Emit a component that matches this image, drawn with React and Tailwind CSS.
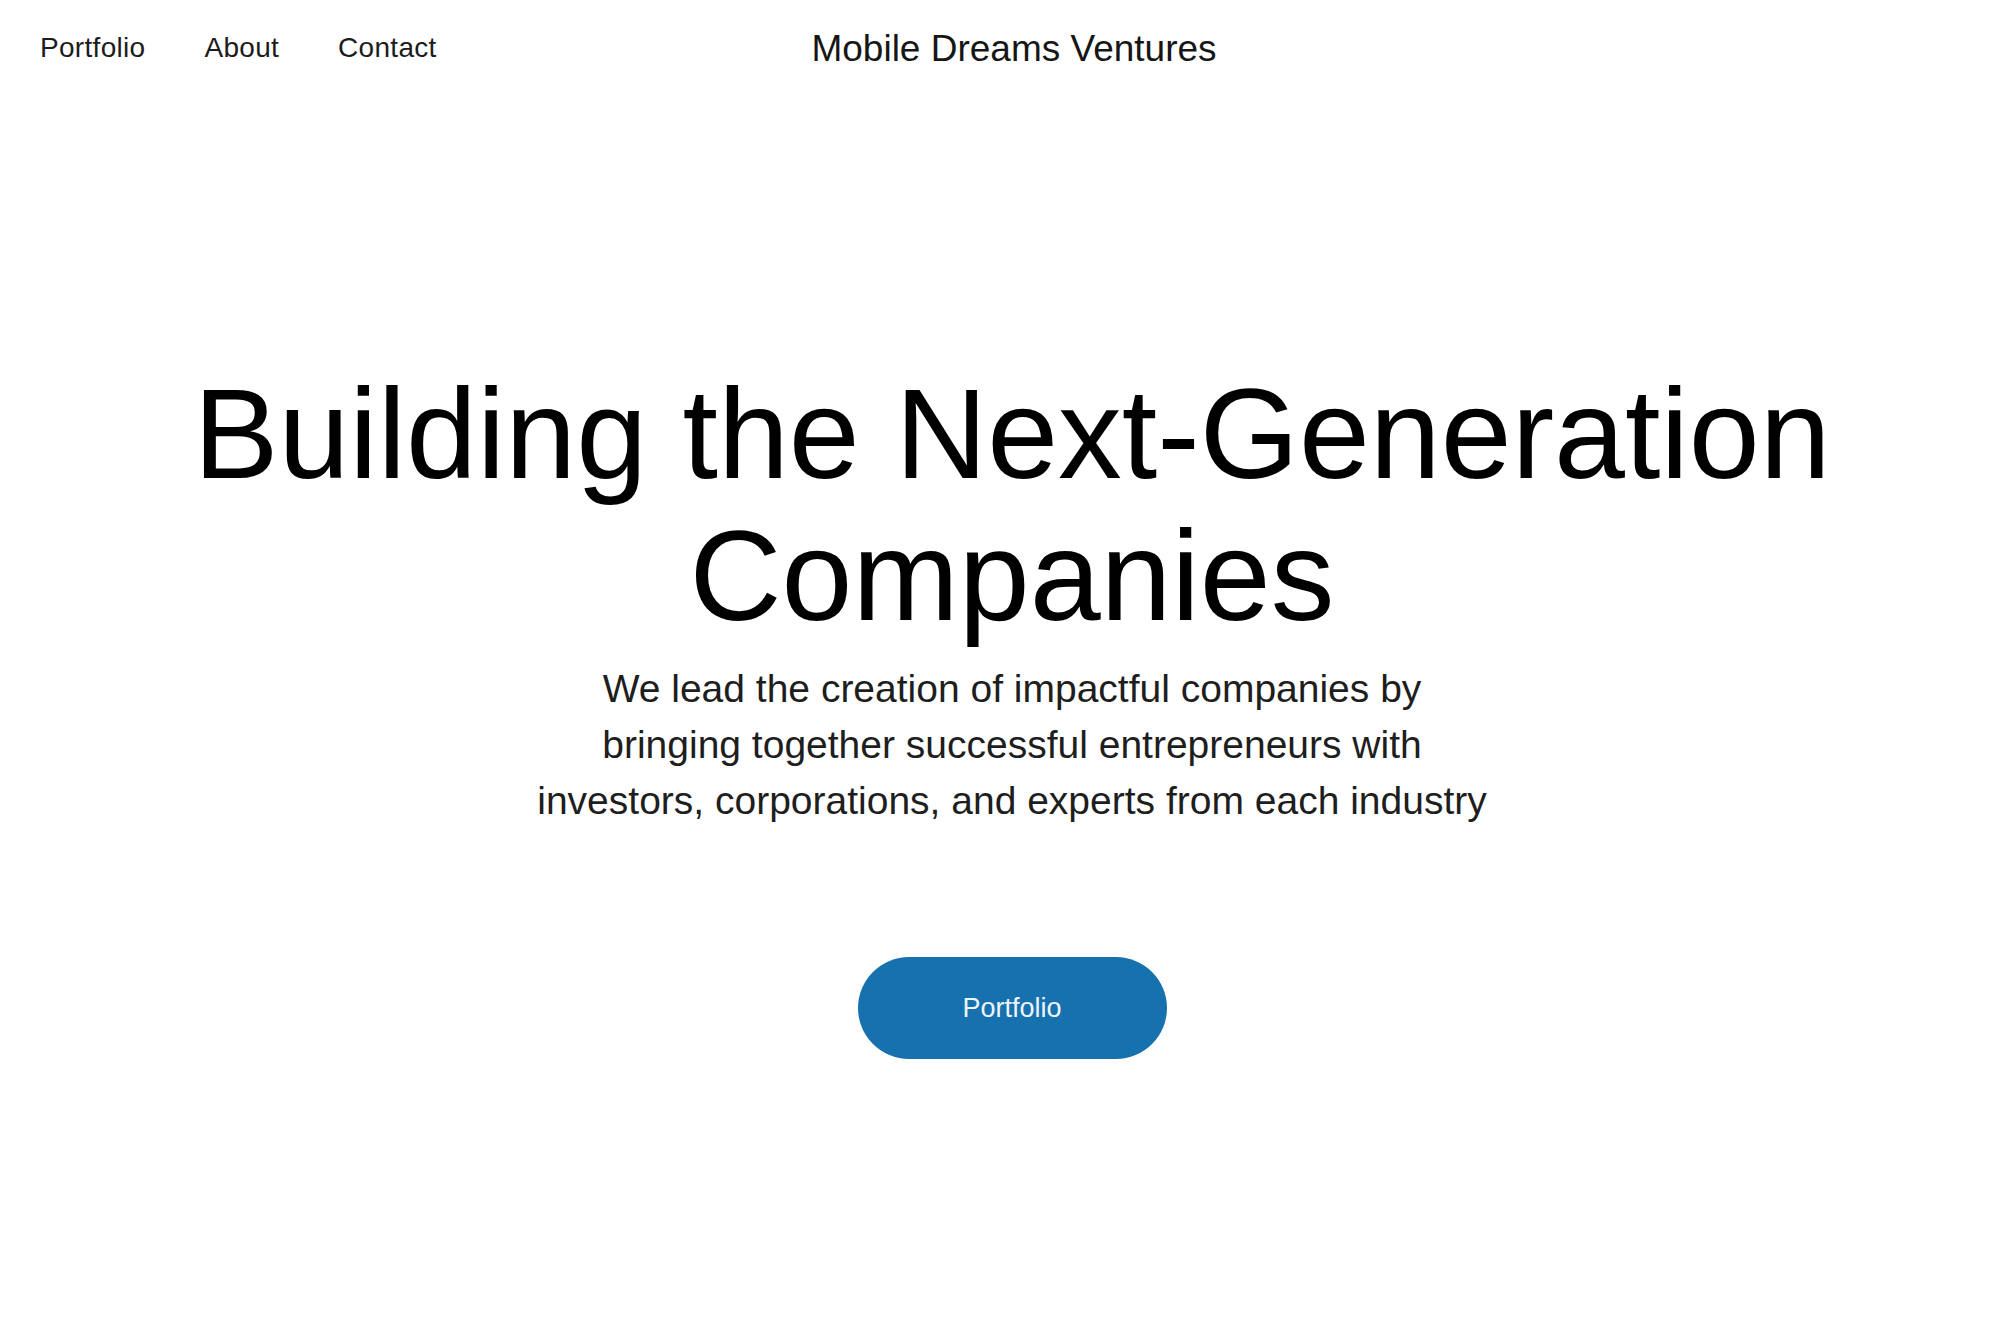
import React from "react";

export default function App() {
  return (
    <div className="min-h-[1333px] w-full bg-white text-[#111] font-['Liberation_Sans',Arial,sans-serif]">
      <header className="grid grid-cols-[1fr_auto_1fr] items-start px-10 pt-[30px]">
        <nav className="flex gap-[59px] pt-[4px] text-[28px] leading-[28px] tracking-[0.3px] text-[#1c1c1c]">
          <a href="#" className="block">Portfolio</a>
          <a href="#" className="block">About</a>
          <a href="#" className="block">Contact</a>
        </nav>
        <div className="pl-[28px] text-[37px] leading-[37px] text-[#161616]">Mobile Dreams Ventures</div>
        <div />
      </header>

      <main className="flex flex-col items-center pl-6 pt-[296px]">
        <h1 className="text-center text-[127.5px] leading-[142px] font-normal text-black">
          Building the Next-Generation
          <br />
          Companies
        </h1>
        <p className="mt-[14px] text-center text-[39px] leading-[56px] text-[#1e1e1e]">
          We lead the creation of impactful companies by
          <br />
          bringing together successful entrepreneurs with
          <br />
          investors, corporations, and experts from each industry
        </p>
        <button className="mt-[128px] flex h-[102px] w-[309px] items-center justify-center rounded-full bg-[#1671ae] text-[27px] text-[#eef4fa]">
          Portfolio
        </button>
      </main>
    </div>
  );
}
